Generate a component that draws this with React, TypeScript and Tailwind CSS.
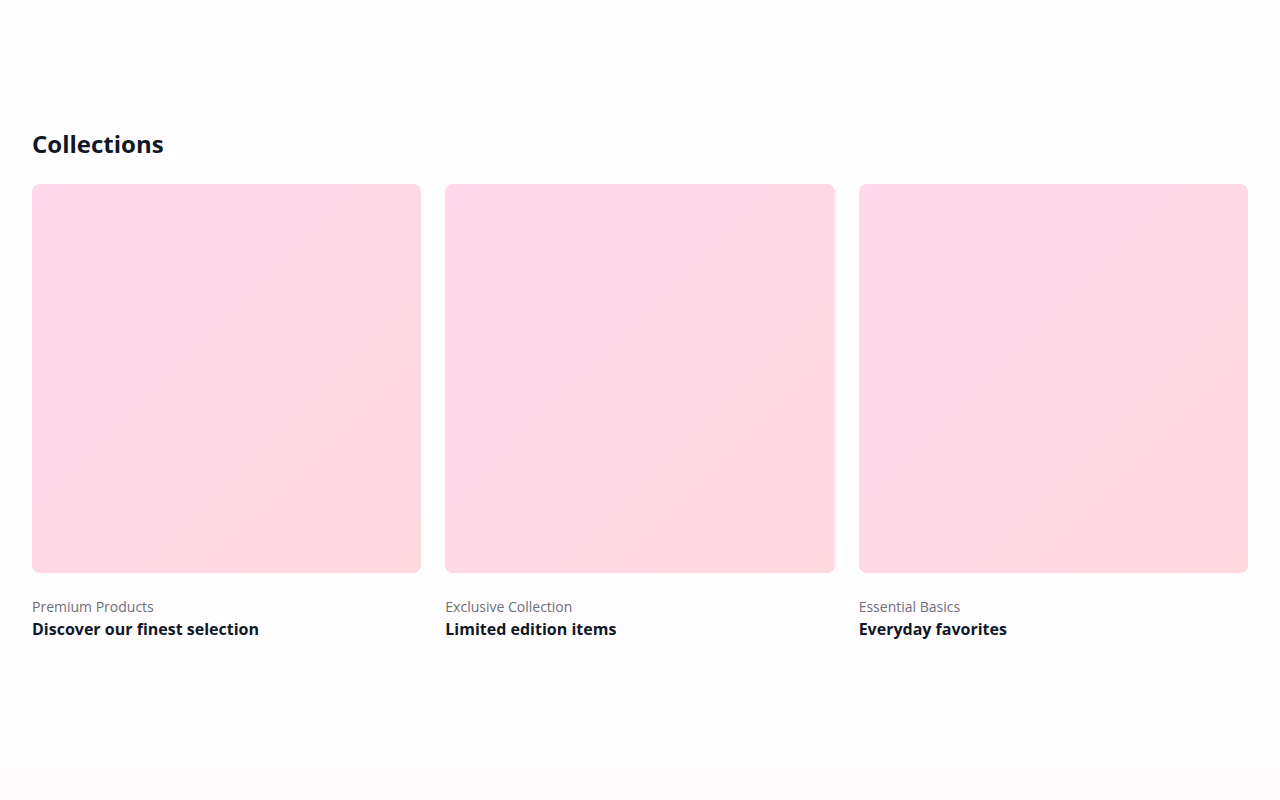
const collections = [
  { label: "Premium Products", title: "Discover our finest selection" },
  { label: "Exclusive Collection", title: "Limited edition items" },
  { label: "Essential Basics", title: "Everyday favorites" },
];

export default function App() {
  return (
    <div className="min-h-screen bg-[#fffdfd] font-['Open_Sans',sans-serif]">
      {/* Collections */}
      <section className="px-8 py-32">
        <h2 className="mb-6 text-2xl font-bold text-gray-900">Collections</h2>
        <div className="grid grid-cols-3 gap-6">
          {collections.map((c) => (
            <div key={c.label} className="flex flex-col">
              <div className="aspect-square w-full rounded-lg bg-gradient-to-br from-[#ffdaec] to-[#ffd8e0]" />
              <p className="mt-6 text-sm text-[#6e6e7c]">{c.label}</p>
              <h3 className="text-base font-bold text-gray-900">{c.title}</h3>
            </div>
          ))}
        </div>
      </section>

      {/* Footer start */}
      <footer className="h-[30px] bg-[#fffafb]" />
    </div>
  );
}
